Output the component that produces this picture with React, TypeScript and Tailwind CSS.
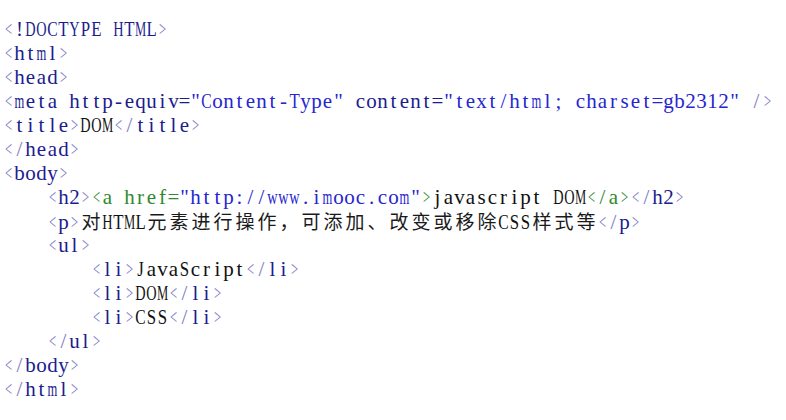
import React from "react";

type Seg = [string, string];

const B = "text-[#7b7bc4]"; // brackets
const N = "text-[#1c1c8e]"; // tag names
const G = "text-[#2e8a2e]"; // green
const V = "text-[#2626d0]"; // values
const T = "text-[#111111]"; // text
const C = "cjk"; // cjk text

const lines: Seg[][] = [
  [[B, "<"], [N, "!DOCTYPE HTML"], [B, ">"]],
  [[B, "<"], [N, "html"], [B, ">"]],
  [[B, "<"], [N, "head"], [B, ">"]],
  [
    [B, "<"],
    [N, "meta http-equiv="],
    [V, "\"Content-Type\""],
    [N, " content="],
    [V, "\"text/html; charset=gb2312\""],
    [N, " "],
    [B, "/>"],
  ],
  [[B, "<"], [N, "title"], [B, ">"], [T, "DOM"], [B, "</"], [N, "title"], [B, ">"]],
  [[B, "</"], [N, "head"], [B, ">"]],
  [[B, "<"], [N, "body"], [B, ">"]],
  [
    [T, "    "],
    [B, "<"],
    [N, "h2"],
    [B, ">"],
    [G, "<a href="],
    [V, "\"http://www.imooc.com\""],
    [G, ">"],
    [T, "javascript DOM"],
    [G, "</a>"],
    [B, "</"],
    [N, "h2"],
    [B, ">"],
  ],
  [
    [T, "    "],
    [B, "<"],
    [N, "p"],
    [B, ">"],
    [C, "对"],
    [T, "HTML"],
    [C, "元素进行操作，可添加、改变或移除"],
    [T, "CSS"],
    [C, "样式等"],
    [B, "</"],
    [N, "p"],
    [B, ">"],
  ],
  [[T, "    "], [B, "<"], [N, "ul"], [B, ">"]],
  [[T, "        "], [B, "<"], [N, "li"], [B, ">"], [T, "JavaScript"], [B, "</"], [N, "li"], [B, ">"]],
  [[T, "        "], [B, "<"], [N, "li"], [B, ">"], [T, "DOM"], [B, "</"], [N, "li"], [B, ">"]],
  [[T, "        "], [B, "<"], [N, "li"], [B, ">"], [T, "CSS"], [B, "</"], [N, "li"], [B, ">"]],
  [[T, "    "], [B, "</"], [N, "ul"], [B, ">"]],
  [[B, "</"], [N, "body"], [B, ">"]],
  [[B, "</"], [N, "html"], [B, ">"]],
];

function scaleFor(ch: string): string {
  if (ch === "W") return "scale-x-[0.52]";
  if ("Mm".includes(ch)) return "scale-x-[0.6]";
  if ("wDOHYNGAVXUKQ".includes(ch)) return "scale-x-[0.68]";
  if ("CR".includes(ch)) return "scale-x-[0.74]";
  if ("TELFZPBSJ".includes(ch)) return "scale-x-[0.8]";
  if ("<>".includes(ch)) return "scale-x-[0.6]";
  return "";
}

function Latin({ text, color }: { text: string; color: string }) {
  return (
    <>
      {Array.from(text).map((ch, k) => (
        <span
          key={k}
          className={`inline-flex w-[11px] justify-center ${color} ${scaleFor(ch)}`}
        >
          {ch === " " ? "\u00a0" : ch}
        </span>
      ))}
    </>
  );
}

function Cjk({ text }: { text: string }) {
  return (
    <>
      {Array.from(text).map((ch, k) => (
        <span
          key={k}
          className="inline-flex w-[22px] justify-center text-[#1a1a1a] text-[19px]"
          style={{ fontFamily: '"Noto Sans CJK SC", sans-serif' }}
        >
          {ch}
        </span>
      ))}
    </>
  );
}

export default function App() {
  return (
    <div className="w-[786px] h-[420px] bg-white overflow-hidden pt-[17px] pl-[3px]">
      <div
        className="text-[21px] leading-[24px] whitespace-pre"
        style={{ fontFamily: '"Liberation Serif", "Noto Sans CJK SC", serif' }}
      >
        {lines.map((line, i) => (
          <div key={i} className="h-[24px] leading-[24px]">
            {line.map(([cls, text], j) =>
              cls === C ? (
                <Cjk key={j} text={text} />
              ) : (
                <Latin key={j} text={text} color={cls} />
              )
            )}
          </div>
        ))}
      </div>
    </div>
  );
}
